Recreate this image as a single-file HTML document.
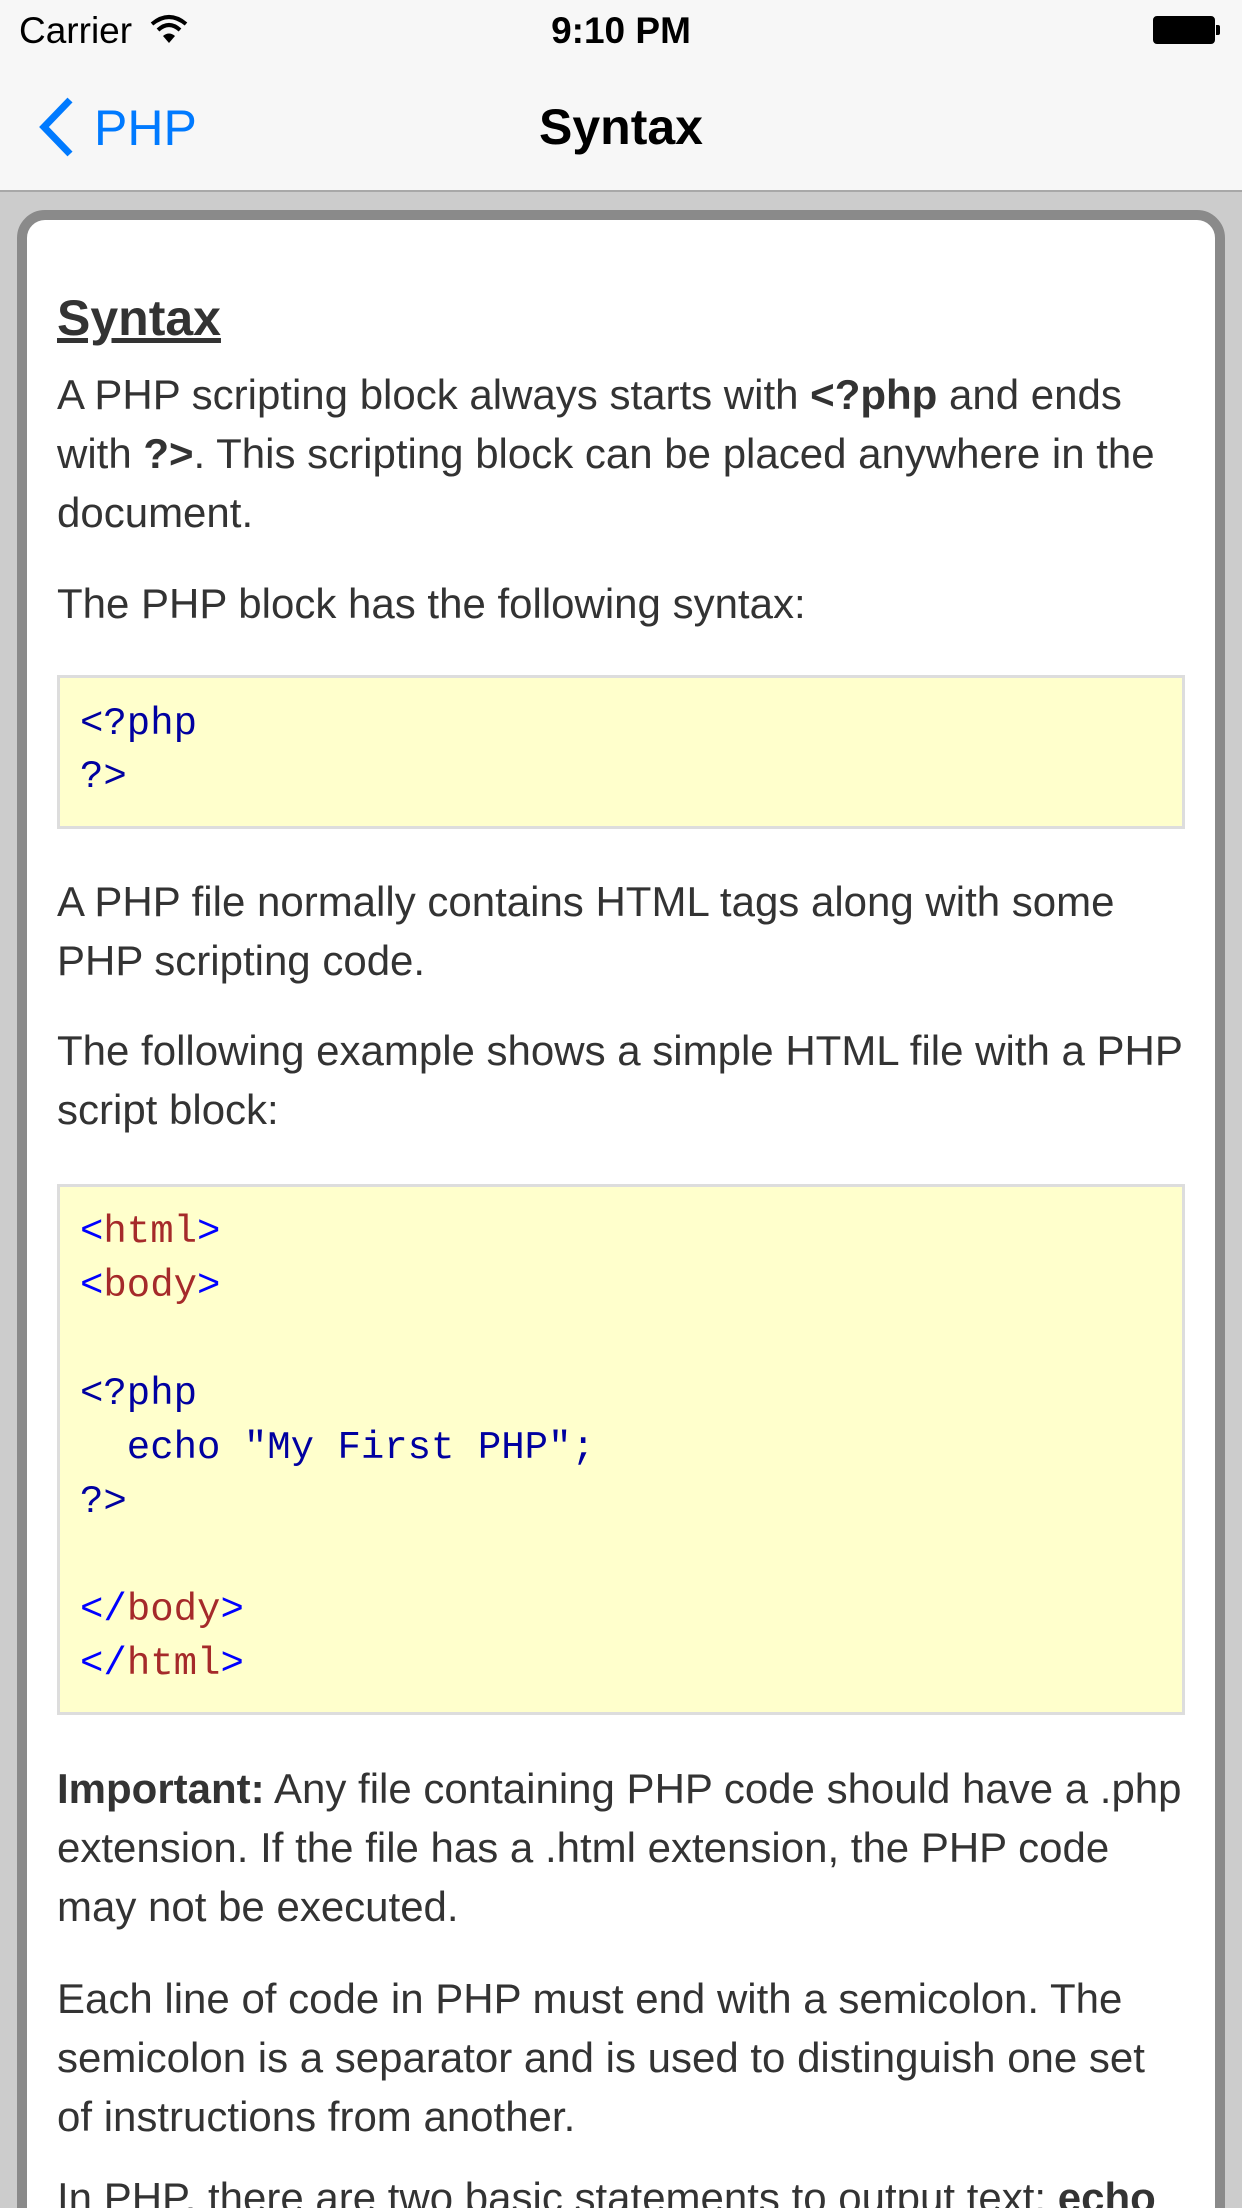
<!DOCTYPE html>
<html><head><meta charset="utf-8">
<style>
*{margin:0;padding:0;box-sizing:border-box}
html,body{width:1242px;height:2208px;overflow:hidden;background:#ccc;font-family:"Liberation Sans",sans-serif}
#wrap{position:relative;width:1242px;height:2208px;overflow:hidden;background:#ccc}
#status{position:absolute;left:0;top:0;width:1242px;height:192px;background:#f7f7f7;border-bottom:2px solid #a8a8a8}
.st{position:absolute;top:8px;font-size:37px;color:#000;line-height:46px}
#card{position:absolute;left:17px;top:210px;width:1208px;height:2100px;background:#fff;border:10px solid #8a8a8a;border-radius:28px}
.p{position:absolute;left:57px;font-size:42px;line-height:59px;color:#333;white-space:nowrap}
.code{position:absolute;left:57px;width:1128px;background:#ffffcc;border:3px solid #ddd;font-family:"Liberation Mono",monospace;font-size:39px;line-height:54px;color:#0000a0;padding-left:20px;white-space:pre}
.b{color:#0000ff}.r{color:#a52a2a}
</style></head><body><div id="wrap">
<div id="status">
 <div class="st" style="left:19px">Carrier</div>
 <svg style="position:absolute;left:150px;top:14px" width="38" height="30" viewBox="0 0 38 30"><path d="M2 10 Q19 -4 36 10" stroke="#000" stroke-width="4" fill="none"/><path d="M8 16 Q19 6 30 16" stroke="#000" stroke-width="4" fill="none"/><path d="M13 22 L19 29 L25 22 Q19 17 13 22Z" fill="#000"/></svg>
 <div class="st" style="left:0;width:1242px;text-align:center;font-weight:bold">9:10 PM</div>
 <div style="position:absolute;left:1153px;top:16px;width:62px;height:28px;border:2px solid #000;border-radius:4px;background:#000"></div>
 <div style="position:absolute;left:1216px;top:25px;width:4px;height:10px;background:#000;border-radius:0 2px 2px 0"></div>
 <svg style="position:absolute;left:36px;top:96px" width="40" height="62" viewBox="0 0 40 62"><path d="M34 4 L8 31 L34 58" stroke="#007aff" stroke-width="7" fill="none"/></svg>
 <div style="position:absolute;left:94px;top:100px;font-size:50px;color:#007aff;line-height:56px">PHP</div>
 <div style="position:absolute;left:0;width:1242px;top:99px;font-size:50px;font-weight:bold;text-align:center;line-height:56px;color:#000">Syntax</div>
</div>
<div id="card"></div>
<div class="p" style="top:288px;font-size:50px;font-weight:bold;line-height:60px;text-decoration:underline">Syntax</div>
<div class="p" style="top:365px">A PHP scripting block always starts with <b>&lt;?php</b> and ends<br>with <b>?&gt;</b>. This scripting block can be placed anywhere in the<br>document.</div>
<div class="p" style="top:574px">The PHP block has the following syntax:</div>
<div class="code" style="top:675px;height:154px;padding-top:20px;line-height:53px">&lt;?php
?&gt;</div>
<div class="p" style="top:872px">A PHP file normally contains HTML tags along with some<br>PHP scripting code.</div>
<div class="p" style="top:1021px">The following example shows a simple HTML file with a PHP<br>script block:</div>
<div class="code" style="top:1184px;height:531px;padding-top:18px"><span class="b">&lt;</span><span class="r">html</span><span class="b">&gt;</span>
<span class="b">&lt;</span><span class="r">body</span><span class="b">&gt;</span>

&lt;?php
  echo "My First PHP";
?&gt;

<span class="b">&lt;/</span><span class="r">body</span><span class="b">&gt;</span>
<span class="b">&lt;/</span><span class="r">html</span><span class="b">&gt;</span></div>
<div class="p" style="top:1759px"><b>Important:</b> Any file containing PHP code should have a .php<br>extension. If the file has a .html extension, the PHP code<br>may not be executed.</div>
<div class="p" style="top:1969px">Each line of code in PHP must end with a semicolon. The<br>semicolon is a separator and is used to distinguish one set<br>of instructions from another.</div>
<div class="p" style="top:2168px">In PHP, there are two basic statements to output text: <b>echo</b></div>
</div></body></html>
